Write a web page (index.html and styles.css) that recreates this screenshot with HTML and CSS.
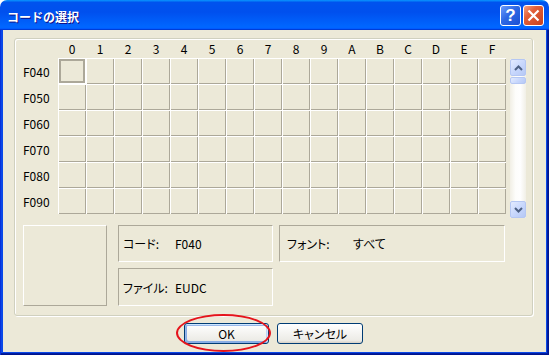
FILE: index.html
```html
<!DOCTYPE html>
<html lang="ja">
<head>
    <meta charset="UTF-8" />
    <title>コードの選択</title>
    <link rel="stylesheet" href="styles.css">
</head>
<body>
    <div class="window">
        <div class="title-bar">
            <span class="title">コードの選択</span>
            <div class="title-controls">
                <button class="tb-btn help">?</button>
                <button class="tb-btn close">
                    <svg width="13" height="13" viewBox="0 0 13 13">
                        <path d="M1.5 1.5 L11.5 11.5 M11.5 1.5 L1.5 11.5" stroke="#fff" stroke-width="2.2" fill="none"/>
                    </svg>
                </button>
            </div>
        </div>

        <div class="frame">
            <div class="client">
                <div class="group">
                    <div class="chart">
                        <div class="scrollbar">
                            <div class="sb-btn">
                                <svg width="9" height="6" viewBox="0 0 9 6"><path d="M1 5 L4.5 1.5 L8 5" stroke="#4d6185" stroke-width="2" fill="none"/></svg>
                            </div>
                            <div class="sb-thumb"></div>
                            <div class="sb-btn down">
                                <svg width="9" height="6" viewBox="0 0 9 6"><path d="M1 1 L4.5 4.5 L8 1" stroke="#4d6185" stroke-width="2" fill="none"/></svg>
                            </div>
                        </div>

                        <div></div>
                        <div class="col-head">0</div><div class="col-head">1</div><div class="col-head">2</div><div class="col-head">3</div>
                        <div class="col-head">4</div><div class="col-head">5</div><div class="col-head">6</div><div class="col-head">7</div>
                        <div class="col-head">8</div><div class="col-head">9</div><div class="col-head">A</div><div class="col-head">B</div>
                        <div class="col-head">C</div><div class="col-head">D</div><div class="col-head">E</div><div class="col-head">F</div>
                        <div></div>

                        <div class="row-head">F040</div>
                        <div class="cell selected"></div><div class="cell"></div><div class="cell"></div><div class="cell"></div>
                        <div class="cell"></div><div class="cell"></div><div class="cell"></div><div class="cell"></div>
                        <div class="cell"></div><div class="cell"></div><div class="cell"></div><div class="cell"></div>
                        <div class="cell"></div><div class="cell"></div><div class="cell"></div><div class="cell"></div>

                        <div class="row-head">F050</div>
                        <div class="cell"></div><div class="cell"></div><div class="cell"></div><div class="cell"></div>
                        <div class="cell"></div><div class="cell"></div><div class="cell"></div><div class="cell"></div>
                        <div class="cell"></div><div class="cell"></div><div class="cell"></div><div class="cell"></div>
                        <div class="cell"></div><div class="cell"></div><div class="cell"></div><div class="cell"></div>

                        <div class="row-head">F060</div>
                        <div class="cell"></div><div class="cell"></div><div class="cell"></div><div class="cell"></div>
                        <div class="cell"></div><div class="cell"></div><div class="cell"></div><div class="cell"></div>
                        <div class="cell"></div><div class="cell"></div><div class="cell"></div><div class="cell"></div>
                        <div class="cell"></div><div class="cell"></div><div class="cell"></div><div class="cell"></div>

                        <div class="row-head">F070</div>
                        <div class="cell"></div><div class="cell"></div><div class="cell"></div><div class="cell"></div>
                        <div class="cell"></div><div class="cell"></div><div class="cell"></div><div class="cell"></div>
                        <div class="cell"></div><div class="cell"></div><div class="cell"></div><div class="cell"></div>
                        <div class="cell"></div><div class="cell"></div><div class="cell"></div><div class="cell"></div>

                        <div class="row-head">F080</div>
                        <div class="cell"></div><div class="cell"></div><div class="cell"></div><div class="cell"></div>
                        <div class="cell"></div><div class="cell"></div><div class="cell"></div><div class="cell"></div>
                        <div class="cell"></div><div class="cell"></div><div class="cell"></div><div class="cell"></div>
                        <div class="cell"></div><div class="cell"></div><div class="cell"></div><div class="cell"></div>

                        <div class="row-head">F090</div>
                        <div class="cell"></div><div class="cell"></div><div class="cell"></div><div class="cell"></div>
                        <div class="cell"></div><div class="cell"></div><div class="cell"></div><div class="cell"></div>
                        <div class="cell"></div><div class="cell"></div><div class="cell"></div><div class="cell"></div>
                        <div class="cell"></div><div class="cell"></div><div class="cell"></div><div class="cell"></div>
                    </div>

                    <div class="details">
                        <div class="preview"></div>
                        <div class="fields">
                            <div class="field"><span class="label">コード:</span><span>F040</span></div>
                            <div class="field font"><span class="label">フォント:</span><span>すべて</span></div>
                            <div class="field"><span class="label">ファイル:</span><span>EUDC</span></div>
                        </div>
                    </div>
                </div>

                <div class="buttons">
                    <button class="btn default">OK</button>
                    <button class="btn cancel">キャンセル</button>
                </div>
            </div>
        </div>

        <div class="highlight"></div>
    </div>
</body>
</html>
```

FILE: styles.css
```css
body {
    margin: 0;
    background: #fff;
    font-family: "Noto Sans CJK JP", "Liberation Sans", sans-serif;
    font-size: 12px;
    color: #000;
}

.window {
    position: relative;
    width: 549px;
    height: 355px;
    display: flex;
    flex-direction: column;
}

/* title bar */
.title-bar {
    flex: none;
    height: 30px;
    box-sizing: border-box;
    padding: 0 5px 0 7px;
    display: flex;
    align-items: center;
    justify-content: space-between;
    border-radius: 7px 7px 0 0;
    background: linear-gradient(180deg, #0997ff, #0053ee 8%, #0050ee 40%, #06f 88%, #06f 93%, #005bff 95%, #003dd7 96%, #003dd7);
}

.title {
    color: #fff;
    font-weight: bold;
    font-size: 12px;
    padding-top: 2px;
    text-shadow: 1px 1px #0f1089;
}

.title-controls {
    display: flex;
    gap: 2px;
    padding-top: 1px;
}

.tb-btn {
    width: 21px;
    height: 21px;
    box-sizing: border-box;
    padding: 0;
    border: 1px solid #fff;
    border-radius: 3px;
    display: flex;
    align-items: center;
    justify-content: center;
}

.help {
    color: #fff;
    font-family: "Liberation Sans", sans-serif;
    font-weight: bold;
    font-size: 17px;
    background: linear-gradient(135deg, #6b9bfb, #2d68e4 45%, #1c4fd3);
}

.close {
    background: linear-gradient(135deg, #f3a283, #e2603a 35%, #c8401c);
}

/* frame + client */
.frame {
    flex: 1;
    display: flex;
    padding: 0 3px 3px;
    background: #0a48e8;
    box-shadow: inset 1px 0 #0831d9, inset -1px 0 #00138c, inset 0 -1px #00138c, inset -2px 0 #001ea0, inset 0 -2px #001ea0;
}

.client {
    flex: 1;
    background: #ece9d8;
    padding-top: 8px;
    display: flex;
    flex-direction: column;
}

.group {
    width: 519px;
    margin-left: 11px;
    box-sizing: border-box;
    padding: 0 6px 9px 8px;
    border: 1px solid #d0d0bf;
    border-radius: 3px;
    box-shadow: inset 1px 1px #fff, 1px 1px #fff;
}

/* code chart */
.chart {
    display: grid;
    grid-template-columns: 35px repeat(16, 28px) 20px;
    grid-template-rows: 19px repeat(6, 26px);
}

.col-head {
    display: flex;
    align-items: center;
    justify-content: center;
}

.row-head {
    display: flex;
    align-items: center;
}

.cell {
    box-shadow: inset 1px 1px #fff, inset -1px -1px #aca899;
}

.cell.selected {
    box-shadow: inset 0 0 0 1px #fff, inset 0 0 0 3px #aca899;
}

.scrollbar {
    grid-column: 18;
    grid-row: 2 / span 6;
    width: 16px;
    height: 159px;
    margin: 1px 0 0 4px;
    display: flex;
    flex-direction: column;
    background: linear-gradient(90deg, #f1efe5, #fdfdfb 35%, #fefefe 65%, #f1efe6);
}

.sb-btn,
.sb-thumb {
    box-sizing: border-box;
    border: 1px solid #b5c7f3;
    border-radius: 2px;
    background: linear-gradient(135deg, #e3ebff, #c6d6fc 55%, #b6c8f5);
}

.sb-btn {
    height: 17px;
    display: flex;
    align-items: center;
    justify-content: center;
}

.sb-thumb {
    height: 7px;
    margin-top: 1px;
}

.sb-btn.down {
    margin-top: auto;
}

/* details */
.details {
    display: flex;
    margin-top: 11px;
}

.preview {
    width: 84px;
    height: 81px;
    box-sizing: border-box;
    margin-right: 11px;
    border: 1px solid;
    border-color: #fff #aca899 #aca899 #fff;
}

.fields {
    display: grid;
    grid-template-columns: 155px 226px;
    grid-template-rows: 37px 38px;
    gap: 6px;
}

.field {
    box-sizing: border-box;
    padding-left: 4px;
    display: flex;
    align-items: center;
    border: 1px solid;
    border-color: #aca899 #fff #fff #aca899;
    font-feature-settings: "palt";
}

.field .label {
    width: 52px;
}

.field.font {
    padding-left: 7px;
}

.field.font .label {
    width: 66px;
}

/* buttons */
.buttons {
    display: flex;
    justify-content: center;
    gap: 8px;
    margin-top: 7px;
    padding-right: 2px;
}

.btn {
    width: 85px;
    height: 21px;
    padding: 0;
    font-family: inherit;
    font-size: 12px;
    font-feature-settings: "palt";
    color: #000;
    border: 1px solid #003c74;
    border-radius: 3px;
    background: linear-gradient(180deg, #fff, #ecebe6 86%, #d6d0c5);
}

.btn.default {
    box-shadow: inset -1px 1px #cee7ff, inset 1px 2px #98b8ea, inset -2px 2px #bcd4f6, inset 1px -1px #89ade4, inset 2px -2px #89ade4;
}

.btn.cancel {
    width: 86px;
}

/* red annotation ring */
.highlight {
    position: absolute;
    left: 176px;
    top: 314px;
    width: 95px;
    height: 38px;
    box-sizing: border-box;
    border: 2px solid #e5141c;
    border-radius: 50%;
    pointer-events: none;
}
```
